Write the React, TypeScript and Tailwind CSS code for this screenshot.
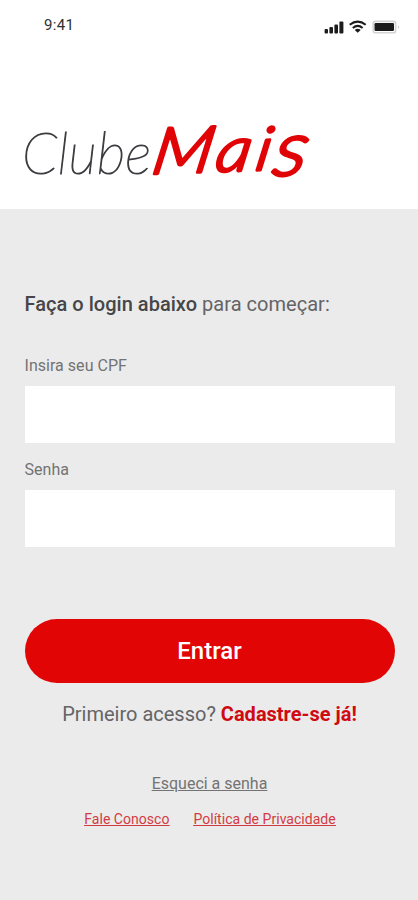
function StatusIcons() {
  return (
    <svg width="76" height="16" viewBox="0 0 76 16" aria-hidden="true">
      <g fill="#1c1c1c">
        <rect x="0.6" y="9" width="3.4" height="4.5" rx="1" />
        <rect x="5.4" y="7" width="3.6" height="6.5" rx="1" />
        <rect x="10.4" y="4.5" width="3.6" height="9" rx="1" />
        <rect x="15.4" y="1.6" width="4" height="11.9" rx="1" />
        <path d="M33.7 12.8 L30.7 10 Q33.7 7.4 36.7 10 Z" />
        <rect x="50.5" y="3" width="19.5" height="8" rx="1.2" />
      </g>
      <g fill="none" stroke="#1c1c1c" strokeWidth="2">
        <path d="M25.7 4.8 Q33.7 -1.6 41.7 4.8" />
        <path d="M28.8 8 Q33.7 3.8 38.6 8" />
      </g>
      <rect x="49.2" y="1.4" width="22.4" height="11.4" rx="2.4" fill="none" stroke="#d4d4d4" strokeWidth="1.6" />
      <path d="M74 5.4 q1.6 1.4 0 3.2 z" fill="#a0a0a0" />
    </svg>
  );
}

function Logo() {
  return (
    <svg className="block overflow-visible" width="300" height="80" viewBox="0 0 300 80" role="img" aria-label="Clube Mais">
      <text x="2" y="64.5" fontSize="58" textLength="129" lengthAdjust="spacingAndGlyphs" fill="#3c3d40" stroke="#3c3d40" strokeWidth="1.2" className="font-[Lato,sans-serif] font-thin italic">Clube</text>
      <g transform="translate(130 65) rotate(-2) skewX(-12) scale(1.12 1)" fill="#e00407" stroke="#e00407" strokeWidth="3" strokeLinejoin="round">
        <text y="0" className="font-[Lato,sans-serif] font-light italic">
          <tspan x="0" fontSize="64">M</tspan>
          <tspan x="57" fontSize="62">a</tspan>
          <tspan x="93" fontSize="60">i</tspan>
          <tspan x="109" y="6" fontSize="76">s</tspan>
        </text>
      </g>
    </svg>
  );
}

function Field({ label, type, id }: { label: string; type: string; id: string }) {
  return (
    <div className="flex flex-col">
      <label htmlFor={id} className="h-[30px] text-[16px] leading-5 tracking-[0.03px] text-[#737373]">{label}</label>
      <input id={id} type={type} className="h-[57px] w-full bg-white px-4 outline-none" />
    </div>
  );
}

export default function App() {
  return (
    <main className="flex h-[900px] w-[418px] flex-col overflow-hidden bg-[#ebebeb] font-[Roboto,sans-serif]">
      <header className="flex h-[209px] flex-col bg-white">
        <div className="flex items-start justify-between pt-[15px] pr-[18px] pl-[44px]">
          <span className="text-[15px] leading-5 tracking-[0.3px] text-[#303030]">9:41</span>
          <div className="pt-[5px]"><StatusIcons /></div>
        </div>
        <div className="mt-[73px] pl-5"><Logo /></div>
      </header>
      <section className="flex flex-col pt-[83px] pr-[23.5px] pl-[24.5px]">
        <h1 className="text-[20px] leading-6 tracking-[0.03px] whitespace-nowrap text-[#646466]">
          <span className="font-medium text-[#464648]">Faça o login abaixo</span> para começar:
        </h1>
        <form className="mt-10 flex flex-col">
          <div className="flex flex-col gap-[17px]">
            <Field id="cpf" label="Insira seu CPF" type="text" />
            <Field id="senha" label="Senha" type="password" />
          </div>
          <button type="button" className="mt-[72px] h-16 rounded-full bg-[#e20506] text-[24px] font-medium text-white">Entrar</button>
        </form>
        <p className="mt-[19px] text-center text-[20px] leading-6 text-[#646466]">
          Primeiro acesso? <a className="font-bold text-[#cf0a12]">Cadastre-se já!</a>
        </p>
        <a className="mt-12 self-center text-[16px] leading-5 text-[#737373] underline">Esqueci a senha</a>
        <nav className="mt-[17px] flex justify-center gap-6 pl-px text-[14px] leading-4 tracking-[0.03px] text-[#d33b43] underline">
          <a>Fale Conosco</a>
          <a>Política de Privacidade</a>
        </nav>
      </section>
    </main>
  );
}
